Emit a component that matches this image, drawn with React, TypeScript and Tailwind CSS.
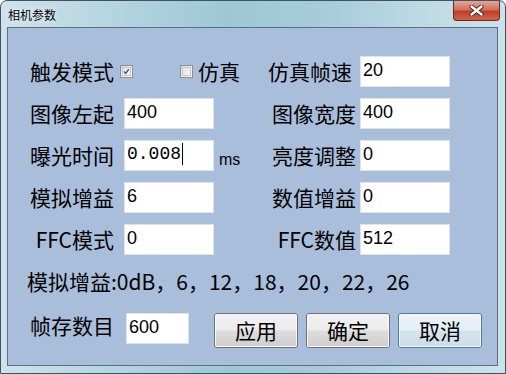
import React from 'react';

function Field({ value, caret, mono, w = 'w-[90px]', ml }: { value: string; caret?: boolean; mono?: boolean; w?: string; ml: string }) {
  return (
    <div className={`${ml} ${w} flex h-[31px] shrink-0 items-center border border-[#dfe3e8] bg-white px-[2px] pb-[3px] text-[18px] text-black`}>
      <span className={mono ? "font-['Liberation_Mono',monospace] text-[18px]" : "font-['Liberation_Sans',Arial,sans-serif]"}>{value}</span>
      {caret && <span className="ml-[1px] h-[22px] w-[1px] bg-black" />}
    </div>
  );
}

function Check({ checked, ml }: { checked?: boolean; ml: string }) {
  return (
    <div className={`${ml} flex h-[13px] w-[13px] shrink-0 items-center justify-center border border-[#8e8f8f] bg-[linear-gradient(135deg,#dcdcdc,#fbfbfb)]`}>
      <div className="flex h-[9px] w-[9px] items-center justify-center border border-[#c6c6c6] bg-[linear-gradient(135deg,#e4e4e4,#f8f8f8)]">
        {checked && (
          <svg width="9" height="9" viewBox="0 0 9 9">
            <path d="M1.5 4.5 L3.5 7 L7.5 1.5" fill="none" stroke="#3a4b8f" strokeWidth="1.6" />
          </svg>
        )}
      </div>
    </div>
  );
}

function Btn({ label, focused, ml }: { label: string; focused?: boolean; ml: string }) {
  return (
    <button
      className={`${ml} h-[35px] w-[84px] shrink-0 rounded-[3px] border p-0 ${
        focused ? 'border-[#3c7fb1]' : 'border-[#707070]'
      }`}
    >
      <div
        className={`flex h-full w-full items-center justify-center rounded-[2px] border border-white/80 text-[21px] text-black ${
          focused
            ? 'bg-[linear-gradient(180deg,#eef5fa_0%,#e3edf4_48%,#d5e3ec_52%,#cddde8_100%)]'
            : 'bg-[linear-gradient(180deg,#f2f2f2_0%,#ebebeb_48%,#dddddd_52%,#cfcfcf_100%)]'
        }`}
      >
        {label}
      </div>
    </button>
  );
}

export default function App() {
  return (
    <div className="h-[374px] w-[506px] overflow-hidden bg-white font-['Noto_Sans_CJK_SC','Noto_Sans',sans-serif]">
      <div className="flex h-[374px] w-[506px] flex-col rounded-t-[7px] border border-[#3e5364] bg-[linear-gradient(90deg,#cfe2eb_0%,#b7d6e2_20%,#9ec7d6_45%,#a7ccdb_65%,#c0dbe6_85%,#cde2ea_100%)]">
        {/* Title bar */}
        <div className="flex h-[26px] shrink-0 items-start">
          <span className="ml-[7px] mt-[6px] text-[12px] leading-[16px] text-black [text-shadow:0_0_6px_#ffffff]">相机参数</span>
          <div className="ml-auto mr-[5px] flex h-[20px] w-[47px] items-center justify-center rounded-b-[4px] border border-t-0 border-[#6b2b22] bg-[linear-gradient(180deg,#e6a595_0%,#d2705e_45%,#c2402b_55%,#d0634a_100%)]">
            <svg width="15" height="11" viewBox="0 0 15 11">
              <path d="M2.5 1.5 L12.5 9.5 M12.5 1.5 L2.5 9.5" stroke="#3a2420" strokeWidth="4.2" strokeLinecap="round" />
              <path d="M2.5 1.5 L12.5 9.5 M12.5 1.5 L2.5 9.5" stroke="#ffffff" strokeWidth="2.4" strokeLinecap="round" />
            </svg>
          </div>
        </div>

        {/* Client area */}
        <div className="ml-[6px] h-[339px] w-[491px] shrink-0 border border-[#5c7082] bg-[#a9bedb] pt-[28px] text-[21px] text-black">
          <div className="flex flex-col gap-[11px]">
            <div className="flex h-[31px] items-center">
              <div className="flex w-[248px] shrink-0 items-center">
                <span className="w-[106px] text-right">触发模式</span>
                <Check checked ml="ml-[6px]" />
                <Check ml="ml-[47px]" />
                <span className="ml-[5px]">仿真</span>
              </div>
              <span className="w-[96px] text-right">仿真帧速</span>
              <Field value="20" ml="ml-[8px]" />
            </div>

            <div className="flex h-[31px] items-center">
              <div className="flex w-[248px] shrink-0 items-center">
                <span className="w-[106px] text-right">图像左起</span>
                <Field value="400" ml="ml-[10px]" />
              </div>
              <span className="w-[100px] text-right">图像宽度</span>
              <Field value="400" ml="ml-[4px]" />
            </div>

            <div className="flex h-[31px] items-center">
              <div className="flex w-[248px] shrink-0 items-center">
                <span className="w-[106px] text-right">曝光时间</span>
                <Field value="0.008" mono caret ml="ml-[10px]" />
                <span className="ml-[5px] mt-[9px] font-['Liberation_Sans',Arial,sans-serif] text-[16px] leading-[16px]">ms</span>
              </div>
              <span className="w-[100px] text-right">亮度调整</span>
              <Field value="0" ml="ml-[4px]" />
            </div>

            <div className="flex h-[31px] items-center">
              <div className="flex w-[248px] shrink-0 items-center">
                <span className="w-[106px] text-right">模拟增益</span>
                <Field value="6" ml="ml-[10px]" />
              </div>
              <span className="w-[100px] text-right">数值增益</span>
              <Field value="0" ml="ml-[4px]" />
            </div>

            <div className="flex h-[31px] items-center">
              <div className="flex w-[248px] shrink-0 items-center">
                <span className="w-[106px] text-right">FFC模式</span>
                <Field value="0" ml="ml-[10px]" />
              </div>
              <span className="w-[100px] text-right">FFC数值</span>
              <Field value="512" ml="ml-[4px]" />
            </div>
          </div>

          <div className="mt-[12px] pl-[19px] leading-[28px]">模拟增益:0dB，6，12，18，20，22，26</div>

          <div className="mt-[18px] flex items-start">
            <span className="w-[106px] text-right leading-[24px]">帧存数目</span>
            <Field value="600" w="w-[63px]" ml="ml-[12px]" />
            <Btn label="应用" ml="ml-[25px]" />
            <Btn label="确定" ml="ml-[8px]" />
            <Btn label="取消" focused ml="ml-[8px]" />
          </div>
        </div>
      </div>
    </div>
  );
}
